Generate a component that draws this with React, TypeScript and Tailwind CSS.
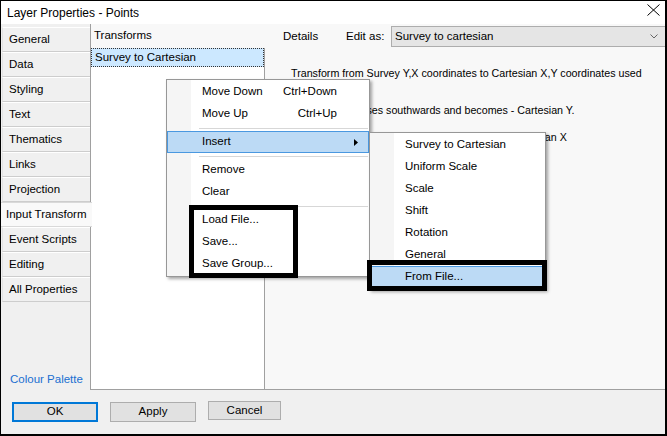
import React from "react";

const tabs = [
  "General",
  "Data",
  "Styling",
  "Text",
  "Thematics",
  "Links",
  "Projection",
  "Input Transform",
  "Event Scripts",
  "Editing",
  "All Properties",
];

const MenuItem = ({
  label,
  shortcut,
  active,
  arrow,
}: {
  label: string;
  shortcut?: string;
  active?: boolean;
  arrow?: boolean;
}) => (
  <div
    className={`relative flex h-[22px] items-center justify-between pl-[34px] pr-[31px] ${
      active ? "border border-[#4a98e0] bg-[#bcdaf5]" : "border border-transparent"
    }`}
  >
    <span>{label}</span>
    {shortcut && <span>{shortcut}</span>}
    {arrow && (
      <svg className="absolute right-[10px] top-[7px]" width="4" height="7" viewBox="0 0 4 7">
        <path d="M0 0 L4 3.5 L0 7 Z" fill="#000" />
      </svg>
    )}
  </div>
);

const Separator = () => (
  <div className="flex h-[6px] items-center pl-[32px] pr-[1px]">
    <div className="h-px w-full bg-[#d7d7d7]" />
  </div>
);

const App = () => {
  return (
    <div className="relative h-[436px] w-[667px] overflow-hidden border-b-2 border-l border-r-2 border-t border-black bg-[#f0f0f0] font-['Liberation_Sans',Arial,sans-serif] text-[11.5px] text-black">
      {/* title bar */}
      <div className="flex h-[23px] items-center justify-between bg-white pl-[6px] pr-[5px]">
        <span className="text-[12px]">Layer Properties - Points</span>
        <svg width="13" height="12" viewBox="0 0 13 12" className="mb-[6px]">
          <path d="M0.5 0.5 L12.5 11.5 M12.5 0.5 L0.5 11.5" stroke="#000" strokeWidth="1" />
        </svg>
      </div>

      {/* main area */}
      <div className="flex h-[366px]">
        <div className="flex w-[89px] shrink-0 flex-col pl-px pt-[3px]">
          {tabs.map((t) =>
            t === "Input Transform" ? (
              <div
                key={t}
                className="relative z-10 -ml-px -mr-[2px] flex h-[25px] items-center border-b border-t border-[#d9d9d9] bg-[#f9f9f9] pl-[5px]"
              >
                {t}
              </div>
            ) : (
              <div
                key={t}
                className="flex h-[25px] items-center border-b border-l border-t border-b-[#cdcdcd] border-l-[#e3e3e3] border-t-white bg-[#f0f0f0] pl-[6px]"
              >
                {t}
              </div>
            )
          )}
          <div className="mt-auto pb-[2px] pl-[8px] text-[#1a6fd0]">Colour Palette</div>
        </div>

        <div className="flex flex-1 border-b border-l border-[#a0a0a0] bg-[#f8f8f8]">
          <div className="flex w-[174px] shrink-0 flex-col">
            <div className="flex h-[24px] items-center pl-[3px]">Transforms</div>
            <div className="flex-1 border-r border-[#a0a0a0] bg-white">
              <div className="flex h-[19px] items-center border border-dotted border-[#333] bg-[#cce8ff] pl-[3px]">
                Survey to Cartesian
              </div>
            </div>
          </div>

          <div className="flex min-w-0 flex-1 flex-col overflow-hidden">
            <div className="flex h-[24px] items-center pt-px">
              <span className="w-[81px] shrink-0 pl-[18px]">Details</span>
              <span className="w-[45px] shrink-0">Edit as:</span>
              <div className="flex h-[21px] w-[277px] shrink-0 items-center justify-between border border-[#adadad] bg-[#e5e5e5] pl-[3px] pr-[9px]">
                <span>Survey to cartesian</span>
                <svg width="8" height="5" viewBox="0 0 8 5">
                  <path d="M0.5 0.5 L4 4 L7.5 0.5" stroke="#666" fill="none" />
                </svg>
              </div>
            </div>
            <div className="whitespace-nowrap pl-[26px] pt-[18px] text-[10.7px] leading-[14px]">
              <p>Transform from Survey Y,X coordinates to Cartesian X,Y coordinates used</p>
              <p className="mt-[4px]">in surveying.</p>
              <p className="mt-[5px]">Survey X increases southwards and becomes - Cartesian Y.</p>
              <p className="mt-[13px]">Survey Y increases eastwards and becomes - Cartesian X</p>
            </div>
          </div>
        </div>
      </div>

      {/* buttons */}
      <div className="flex items-start gap-[12px] pl-[11px] pt-[12px]">
        <button className="flex h-[20px] w-[86px] items-center justify-center border-2 border-[#0078d7] bg-[#e1e1e1]">
          OK
        </button>
        <button className="flex h-[20px] w-[86px] items-center justify-center border border-[#adadad] bg-[#e1e1e1]">
          Apply
        </button>
        <button className="-mt-px flex h-[19px] w-[73px] items-center justify-center border border-[#adadad] bg-[#e1e1e1]">
          Cancel
        </button>
      </div>

      {/* context menu */}
      <div className="absolute left-[165px] top-[78px] w-[204px] border border-[#979797] bg-white py-px shadow-[2px_2px_3px_rgba(0,0,0,0.35)]">
        <div className="absolute bottom-0 left-0 top-0 w-[24px] bg-[#f5f5f5]" />
        <div className="relative">
          <MenuItem label="Move Down" shortcut="Ctrl+Down" />
          <div className="flex h-[22px] items-center justify-between pl-[35px] pr-[32px]">
            <span>Move Up</span>
            <span>Ctrl+Up</span>
          </div>
          <Separator />
          <MenuItem label="Insert" active arrow />
          <Separator />
          <MenuItem label="Remove" />
          <MenuItem label="Clear" />
          <Separator />
          <MenuItem label="Load File..." />
          <MenuItem label="Save..." />
          <MenuItem label="Save Group..." />
        </div>
      </div>

      {/* submenu */}
      <div className="absolute left-[368px] top-[131px] w-[177px] border border-[#979797] bg-white py-px shadow-[2px_2px_3px_rgba(0,0,0,0.35)]">
        <div className="absolute bottom-0 left-0 top-0 w-[24px] bg-[#f5f5f5]" />
        <div className="relative">
          <MenuItem label="Survey to Cartesian" />
          <MenuItem label="Uniform Scale" />
          <MenuItem label="Scale" />
          <MenuItem label="Shift" />
          <MenuItem label="Rotation" />
          <MenuItem label="General" />
          <MenuItem label="From File..." active />
        </div>
      </div>

      {/* annotation boxes */}
      <div className="absolute left-[188px] top-[204px] h-[73px] w-[109px] border-[5px] border-black" />
      <div className="absolute left-[366px] top-[259px] h-[31px] w-[180px] border-[5px] border-black" />
    </div>
  );
};

export default App;
